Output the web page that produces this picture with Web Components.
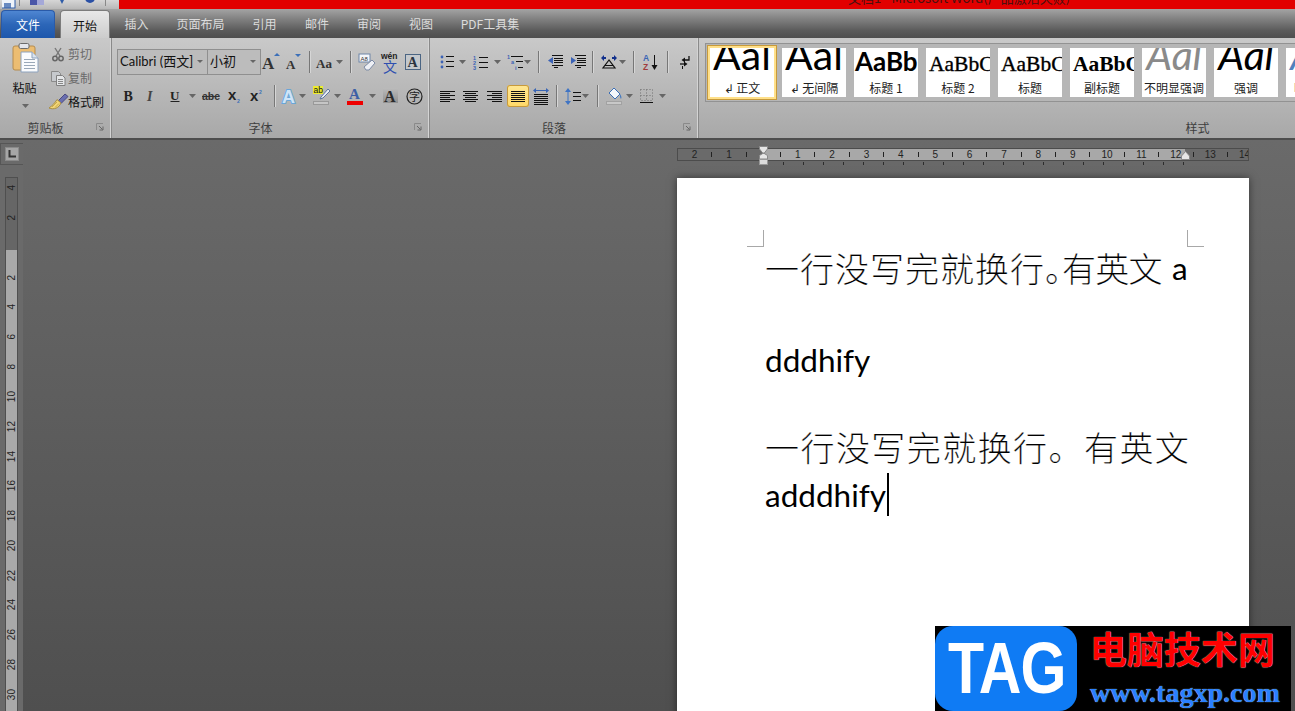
<!DOCTYPE html>
<html lang="zh-CN"><head><meta charset="utf-8"><title>Word</title>
<style>
html,body{margin:0;padding:0;height:711px;overflow:hidden;background:#555;font-family:"Noto Sans CJK SC","Liberation Sans",sans-serif}
</style></head><body>
<word-app>
  <title-bar slot="top"></title-bar>
  <tab-bar slot="top"></tab-bar>
  <w-ribbon slot="top">
    <rib-group w="112" label="剪贴板" launcher>
      <clip-panel></clip-panel>
    </rib-group>
    <rib-group w="318" label="字体" launcher>
      <tool-row pad="5">
        <w-combo w="91" text="Calibri (西文]"></w-combo><w-combo w="54" text="小初"></w-combo>
        <w-tool i="grow" w="22"></w-tool><w-tool i="shrink" w="22"></w-tool><w-sep w="10"></w-sep>
        <w-tool i="aa" w="21"></w-tool><w-drop w="9"></w-drop><w-sep w="12"></w-sep>
        <w-tool i="clear" w="22"></w-tool><w-tool i="wen" w="24"></w-tool><w-tool i="abox" w="22"></w-tool>
      </tool-row>
      <tool-row pad="5">
        <w-tool i="b" w="23"></w-tool><w-tool i="it" w="24"></w-tool><w-tool i="u" w="22"></w-tool><w-drop w="12"></w-drop>
        <w-tool i="abe" w="26"></w-tool><w-tool i="sub" w="22"></w-tool><w-tool i="sup" w="22"></w-tool><w-sep w="12"></w-sep>
        <w-tool i="fx" w="18"></w-tool><w-drop w="8"></w-drop><w-tool i="hl" w="30"></w-tool><w-drop w="3"></w-drop>
        <w-tool i="fc" w="32"></w-tool><w-drop w="2"></w-drop><w-tool i="shade" w="36"></w-tool><w-tool i="enc" w="10"></w-tool>
      </tool-row>
    </rib-group>
    <rib-group w="269" label="段落" launcher>
      <tool-row pad="5">
        <w-tool i="bul" w="24"></w-tool><w-drop w="6"></w-drop><w-tool i="num" w="30"></w-tool><w-drop w="4"></w-drop>
        <w-tool i="multi" w="20" m="6"></w-tool><w-drop w="4"></w-drop><w-sep w="18"></w-sep>
        <w-tool i="ded" w="16"></w-tool><w-tool i="ind" w="24" m="3"></w-tool><w-sep w="4"></w-sep>
        <w-tool i="cn" w="24" m="3"></w-tool><w-drop w="2"></w-drop><w-sep w="20"></w-sep>
        <w-tool i="sort" w="14"></w-tool><w-sep w="20"></w-sep><w-tool i="show" w="14"></w-tool>
      </tool-row>
      <tool-row pad="5">
        <w-tool i="left" w="24"></w-tool><w-tool i="center" w="22"></w-tool><w-tool i="right" w="26"></w-tool>
        <w-tool i="just" w="22" on></w-tool><w-tool i="dist" w="24"></w-tool><w-sep w="6"></w-sep>
        <w-tool i="ls" w="22" m="3"></w-tool><w-drop w="3"></w-drop><w-sep w="20"></w-sep>
        <w-tool i="fill" w="14"></w-tool><w-drop w="16"></w-drop><w-tool i="bord" w="20"></w-tool><w-drop w="10"></w-drop>
      </tool-row>
    </rib-group>
    <rib-group w="998" label="样式" last>
      <style-gallery>
        <style-item sel label="↲ 正文" pv="Aal" kind="big"></style-item>
        <style-item label="↲ 无间隔" pv="Aal" kind="big"></style-item>
        <style-item label="标题 1" pv="AaBb" kind="h1"></style-item>
        <style-item label="标题 2" pv="AaBbC" kind="h3"></style-item>
        <style-item label="标题" pv="AaBbC" kind="h3"></style-item>
        <style-item label="副标题" pv="AaBbC" kind="h2"></style-item>
        <style-item label="不明显强调" pv="Aal" kind="sub"></style-item>
        <style-item label="强调" pv="Aal" kind="em"></style-item>
        <style-item label="明显强调" pv="Aal" kind="blue"></style-item>
      </style-gallery>
    </rib-group>
  </w-ribbon>
  <work-space slot="main">
    <left-rail slot="left"></left-rail>
    <h-ruler slot="right"></h-ruler>
    <doc-page slot="right">
      <doc-line cjk>一行没写完就换行<span style="display:inline-block;width:17px;letter-spacing:0">。</span><span style="letter-spacing:-.7px">有英文</span><i style="font:31.5px/41px Lato,sans-serif;letter-spacing:0;margin-left:10px;-webkit-text-stroke:0;vertical-align:2px">a</i></doc-line>
      <doc-line style="margin-top:44px">dddhify</doc-line>
      <doc-line cjk style="margin-top:43px;letter-spacing:1.44px">一行没写完就换行。有英文</doc-line>
      <doc-line caret>adddhify</doc-line>
    </doc-page>
  </work-space>
  <tag-mark slot="over"></tag-mark>
</word-app>
<script>
const def=(n,css,html)=>{customElements.define(n,class extends HTMLElement{
  connectedCallback(){ if(this.shadowRoot) return; const s=this.attachShadow({mode:'open'});
    const b=html===undefined?'<slot></slot>':(typeof html==='function'?html(this):html);
    s.innerHTML='<style>'+css+'</style>'+b;}
})};
const SANS='"Noto Sans CJK SC","Liberation Sans",sans-serif';
const T=(x,y,t,sz,o={})=>`<text x="${x}" y="${y}" font-size="${sz}" font-family='${o.f||'"Liberation Serif",serif'}' font-weight="${o.w||'bold'}" font-style="${o.s||'normal'}" fill="${o.c||'#222'}" ${o.e||''}>${t}</text>`;
const R=(x,y,w,h,c='#111')=>`<rect x="${x}" y="${y}" width="${w}" height="${h}" fill="${c}"/>`;
const P=(d,c='none',s='#111',w=1)=>`<path d="${d}" fill="${c}" stroke="${s}" stroke-width="${w}"/>`;
const lines=(arr,c='#111')=>arr.map(a=>R(a[0],a[1],a[2],1,c)).join('');
const BL='#3b62b5';const LS='"Liberation Sans",sans-serif';
const ICONS={
 grow:[22,20,T(2,17,'A',17,{c:'#333'})+P('M14 4l3-3 3 3z','#3b6fb8','none')],
 shrink:[20,20,T(3,17,'A',13,{c:'#333'})+P('M12 2h6l-3 3z','#3b6fb8','none')],
 aa:[20,18,T(1,15,'Aa',13,{c:'#333'})],
 clear:[18,18,`<rect x="1" y="1" width="11" height="8" fill="#f4f6fa" stroke="#6e86a8"/>`+T(2.5,7.5,'A8',6,{c:'#333',f:LS,w:'normal'})+P('M6 14l8-7 3 3-6 7h-3z','#eef0f5','#7d8ba5')],
 wen:[20,22,T(1,8,'wén',8.5,{f:LS,c:'#222'})+T(3,21,'文',14,{f:SANS,w:'normal',c:'#2d4fb0'})],
 abox:[17,17,`<rect x=".5" y=".5" width="15" height="15" fill="#c4c8cc" stroke="#4b6583"/>`+T(2.5,13,'A',14,{c:'#2b3440'})],
 b:[14,16,T(1.5,13,'B',14,{c:'#222'})],
 it:[12,16,T(1,13,'I',14,{c:'#444',s:'italic'})],
 u:[12,16,T(1,11.5,'U',13,{c:'#222'})+R(1.5,13,9,1,'#222')],
 abe:[18,16,T(0,12,'abe',10.5,{c:'#333',f:LS})+R(0,8,17,1,'#333')],
 sub:[14,16,T(0,12,'x',15,{c:'#222',f:LS})+T(9,15,'2',5,{c:'#3b6fb8',f:LS})],
 sup:[14,16,T(0,13,'x',15,{c:'#222',f:LS})+T(9,6,'2',5,{c:'#3b6fb8',f:LS})],
 fx:[18,20,`<text x="2" y="17" font-size="18" font-family="Liberation Sans" font-weight="bold" fill="#cfe4f7" stroke="#6aa6d8" stroke-width="2" paint-order="stroke">A</text>`],
 hl:[18,20,R(1,0,10,8,'#ecec30')+T(1.5,7,'ab',8.5,{c:'#111',f:LS,w:'normal'})+P('M9 11l7-8 2 2-7 7-3 1z','#e8edf4','#5c76a0')+`<rect x="1.5" y="15.5" width="15" height="3" fill="#c6c6c6" stroke="#999"/>`],
 fc:[16,20,T(2,13,'A',15,{c:'#3c5fa5'})+R(0,15,16,4,'#ee0000')],
 shade:[16,16,`<defs><linearGradient id="s" x1="0" x2="0" y1="0" y2="1"><stop offset="0" stop-color="#bbb"/><stop offset="1" stop-color="#8f8f8f"/></linearGradient></defs><rect width="15" height="15" fill="url(#s)"/>`+T(1,14,'A',16,{c:'#2a2a2a'})],
 enc:[17,17,`<circle cx="8.5" cy="8.5" r="7.5" fill="none" stroke="#222" stroke-width="1.2"/>`+T(3,13,'字',11,{f:SANS,w:'normal',c:'#222'})],
 bul:[14,14,['2','7','12'].map(y=>`<circle cx="2" cy="${y}" r="1.4" fill="${BL}"/>`).join('')+lines([[6,1,8],[6,6,8],[6,11,8]])],
 num:[15,15,T(0,5,'1',5.5,{c:BL,f:LS})+T(0,10,'2',5.5,{c:BL,f:LS})+T(0,15,'3',5.5,{c:BL,f:LS})+lines([[6,2,9],[6,7,9],[6,12,9]])],
 multi:[16,16,T(0,5,'1',5.5,{c:BL,f:LS})+T(4,10,'a',5.5,{c:BL,f:LS})+T(8,16,'i',5.5,{c:BL,f:LS})+lines([[4,2,12],[9,7,7],[11,13,5]])],
 ded:[16,14,P('M6 2L1 5.5 6 9z',BL,'none')+lines([[5,0,11],[7,3,9],[7,5,9],[7,7,9],[5,10,11],[7,12,4]])],
 ind:[16,14,P('M1 2l5 3.5L1 9z',BL,'none')+lines([[5,0,11],[7,3,9],[7,5,9],[7,7,9],[5,10,11],[7,12,4]])],
 cn:[16,14,P('M8 5l-6 8h12z','none','#111',1.2)+R(4,10,8,1)+P('M0 3l3-3v2h2v2H3v2z','#12308c','none')+P('M16 3l-3-3v2h-2v2h2v2z','#12308c','none')],
 sort:[14,17,T(0,7,'A',8.5,{c:'#3a66b5',f:LS})+T(0,16,'Z',8.5,{c:'#a03c3c',f:LS})+R(11,1,1,12,'#111')+P('M8.5 11h6l-3 5z','#111','none')],
 show:[11,14,P('M10 1v4H5','none','#111',1.3)+P('M6 2.5L2.5 5 6 7.5z','#111','none')+P('M1 9h5','none','#111',1.3)+P('M5 6.5L8.5 9 5 11.5z','#111','none')+R(3,11,1,3)],
 left:[15,11,lines([[0,0,15],[0,2,10],[0,4,15],[0,6,10],[0,8,15],[0,10,10]])],
 center:[15,11,lines([[0,0,15],[2,2,11],[0,4,15],[2,6,11],[0,8,15],[2,10,11]])],
 right:[15,11,lines([[0,0,15],[5,2,10],[0,4,15],[5,6,10],[0,8,15],[5,10,10]])],
 just:[14,11,lines([[0,0,14],[0,2,14],[0,4,14],[0,6,14],[0,8,14],[0,10,14]])],
 dist:[16,17,P('M0 2.5l3-2.5v5zM16 2.5l-3-2.5v5z','#3a66b5','none')+R(2,2,12,1,'#3a66b5')+lines([[1,6,14],[1,8,14],[1,10,14],[1,12,14],[1,14,14],[1,16,14]])],
 ls:[16,17,P('M3 0l3 4H0zM3 17l3-4H0z','#3f74c4','none')+R(2.5,4,1,9,'#3f74c4')+lines([[8,4,8],[8,8,8],[8,12,8]])],
 fill:[17,18,P('M3 6l5-5 6 6-5 5z','#f4f7fb','#3c6fb6',1)+P('M14 7c1 2 2 3 1 5-1-1-1-3-1-5z','#3a74c0','none')+`<rect x=".5" y="14.500" width="15" height="3" fill="#c8c8c8" stroke="#a2a2a2"/>`],
 bord:[14,15,`<path d="M.5.5h12v11H.5zM6.5.5v11M.5 6.500h12" fill="none" stroke="#6e6e6e" stroke-dasharray="1 2"/>`+R(0,13,13,1,'#111')],
 paste:[28,32,`<rect x="1" y="4" width="22" height="24" rx="2" fill="#ecbd72" stroke="#b58c4e"/><rect x="7" y="1.5" width="10" height="5" rx="1.5" fill="#e4e6ec" stroke="#6b6b6b"/><path d="M9 10h11l6 6v14H9z" fill="#fafbfd" stroke="#8da2bd"/><path d="M20 10v6h6" fill="#dbe4ee" stroke="#8da2bd"/>`+lines([[12,17,11],[12,20,11],[12,23,11],[12,26,11]],'#9aa8b8')],
 cut:[12,15,P('M3 1l5 8M9 1L4 9','none','#777',1.4)+`<circle cx="3" cy="11.5" r="2.2" fill="none" stroke="#666" stroke-width="1.5"/><circle cx="9" cy="11.5" r="2.2" fill="none" stroke="#666" stroke-width="1.5"/>`],
 copy:[15,15,`<path d="M.5.5h7l2 2v8H.5z" fill="#c6c9cd" stroke="#8a8a8a"/><path d="M5.5 4.5h6l2.5 2.5v7.5H5.5z" fill="#e4e6e8" stroke="#808080"/>`+lines([[7,8,5],[7,10,5],[7,12,5]],'#888')],
 brush:[19,16,P('M9 7l7-7 3 2.500-7 7z','#6a6fb0','#4a4a80')+P('M0 14c5 2 10 0 12-5L8 5.500C6 9 3 12 0 14z','#f2d676','#a88e44')+P('M3 13l5-5M6 13.500l4-4','none','#c7a84e')]
};
const svg=k=>{const [w,h,b]=ICONS[k];return `<svg xmlns="http://www.w3.org/2000/svg" width="${w}" height="${h}" viewBox="0 0 ${w} ${h}" style="flex:none;display:block;overflow:visible">${b}</svg>`};

def('word-app',':host{display:block;position:relative;width:1295px;height:711px;overflow:hidden}.c{display:flex;flex-direction:column;height:100%}::slotted([slot=main]){flex:1;min-height:0}',
 '<div class="c"><slot name="top"></slot><slot name="main"></slot></div><slot name="over"></slot>');

def('title-bar',':host{display:flex;height:9px;overflow:hidden;flex:none}.q{width:119px;flex:none;background:linear-gradient(#d6d6d6,#b8b8b8);display:flex;align-items:flex-end;overflow:hidden;padding-left:2px;box-sizing:border-box;gap:0}.r{flex:1;background:#e20000;display:flex;justify-content:flex-start;padding-left:729px;overflow:hidden;color:#4a1010;font:13px/14px "Noto Sans CJK SC",sans-serif;white-space:nowrap}.t{margin-top:-9px}',
 `<div class="q"><svg width="110" height="9" viewBox="0 0 110 9" style="display:block;flex:none"><rect x="-1" y="-5" width="14" height="13" fill="#eef3fa" stroke="#2f5ca8"/><rect x="2" y="3" width="7" height="5" fill="#2f5ca8" opacity=".7"/><rect x="17" y="0" width="1" height="6" fill="#888"/><rect x="28" y="-5" width="14" height="10" fill="#4a56a8"/><rect x="35" y="0" width="7" height="5" fill="#a4a8d8"/><path d="M58 0h4l-2 4z" fill="#2f5ca8"/><circle cx="88" cy="-2" r="5" fill="#2a50a5"/><rect x="103" y="0" width="1" height="6" fill="#888"/></svg></div><div class="r"><span class="t">文档1 - Microsoft Word(产品激活失败)</span></div>`);

def('tab-bar',`:host{display:flex;flex:none;height:29px;background:linear-gradient(#a4a4a4,#8a8a8a 25%,#5a5a5a 75%,#4e4e4e);padding-left:1px;box-sizing:border-box;font:12px "Noto Sans CJK SC",sans-serif;color:#dcdcdc;overflow:hidden;position:relative;z-index:1}
 .t{display:flex;align-items:center;justify-content:center;flex:none;height:29px}
 .f{width:54px;box-sizing:border-box;height:28px;margin-top:1px;background:linear-gradient(#4e86d2,#2c66b8 50%,#1d57ac);border:1px solid #2a5aa8;border-bottom:none;border-radius:4px 4px 0 0;color:#fff;margin-right:5px}
 .h{width:50px;box-sizing:border-box;height:29px;margin-top:1px;background:linear-gradient(#e8e8e8,#cbcbcb);border:1px solid #7c7c7c;border-bottom:none;border-radius:4px 4px 0 0;color:#111}`,
 `<div class="t f">文件</div><div class="t h">开始</div>${[['插入',53],['页面布局',75],['引用',53],['邮件',52],['审阅',52],['视图',52],['PDF工具集',86]].map(a=>`<div class="t" style="width:${a[1]}px">${a[0]}</div>`).join('')}`);

def('w-ribbon',':host{display:flex;height:102px;box-sizing:border-box;background:linear-gradient(#c9c9c9,#a8a8a8);border-bottom:2px solid #4d4d4d;overflow:hidden;flex:none}');
def('rib-group',':host{display:flex;flex-direction:column;box-sizing:border-box;height:100px;flex:none;border-right:1px solid #8a8a8a;box-shadow:inset -1px 0 #d4d4d4;position:relative}.b{flex:1;min-height:0}.l{height:20px;flex:none;text-align:center;font:12px/20px "Noto Sans CJK SC",sans-serif;color:#3e3e3e}.pad{padding-right:20px}svg{position:absolute;right:7px;bottom:7px}',
 h=>{h.style.width=h.getAttribute('w')+'px';const L=h.hasAttribute('launcher');return `<div class="b"><slot></slot></div><div class="l ${L?'pad':''}">${h.getAttribute('label')}</div>${L?'<svg width="8" height="8" viewBox="0 0 8 8"><path d="M.5 7V.5H7" fill="none" stroke="#8a8a8a"/><path d="M3 3l3.5 3.5M7 3.5V7H3.5" fill="none" stroke="#666"/></svg>':''}`});

def('tool-row',':host{display:flex;align-items:center;height:26px;margin-bottom:8px}:host(:first-child){margin-top:11px}',h=>{h.style.paddingLeft=h.getAttribute('pad')+'px';return '<slot></slot>'});

def('w-tool',':host{display:flex;flex:none;align-items:center;justify-content:center;height:22px;box-sizing:border-box;border-radius:3px}:host([on]){background:linear-gradient(#ffe793,#ffd866);box-shadow:inset 0 0 0 1px #c79a3c}',
 h=>{h.style.width=h.getAttribute('w')+'px';if(h.hasAttribute('m'))h.style.marginLeft=h.getAttribute('m')+'px';return svg(h.getAttribute('i'))});
def('w-drop',':host{display:flex;flex:none;align-items:center;justify-content:center;height:22px}svg{flex:none}',
 h=>{h.style.width=h.getAttribute('w')+'px';return '<svg width="7" height="4" viewBox="0 0 7 4"><path d="M0 0h7L3.500 4z" fill="#666"/></svg>'});
def('w-sep',':host{display:flex;flex:none;justify-content:center;height:22px}i{display:block;flex:none;width:1px;background:#777;box-shadow:1px 0 #d6d6d6}',
 h=>{h.style.width=h.getAttribute('w')+'px';return '<i></i>'});
def('w-combo',':host{display:flex;flex:none;align-items:center;box-sizing:border-box;height:26px;border:1px solid #8f8f8f;background:#bcbcbc;font:13px/22px "Noto Sans CJK SC","Liberation Sans",sans-serif;color:#111;padding:0 0 2px 2px;margin-right:-1px;white-space:nowrap;overflow:hidden;position:relative}.t{font-family:Lato,"Noto Sans CJK SC",sans-serif;flex:1;overflow:hidden}svg{flex:none;margin:0 4px 0 2px}',
 h=>{h.style.width=h.getAttribute('w')+'px';return `<span class="t">${h.getAttribute('text')}</span><svg width="6" height="3" viewBox="0 0 6 3"><path d="M0 0h6L3 3z" fill="#666"/></svg>`});

def('clip-panel',':host{display:flex;padding-top:4px;height:76px;box-sizing:border-box;font:12px/16px "Noto Sans CJK SC",sans-serif}.p{width:49px;flex:none;display:flex;flex-direction:column;align-items:center}.p svg{margin-left:2px}.lb{margin-top:6px;color:#111}.ar{margin-top:8px}.s{display:flex;flex-direction:column;margin-top:0}.r{display:flex;align-items:center;height:25px;color:#6a6a6a}.r span{margin-left:1px}.ic{width:18px;display:flex;justify-content:center}.r.on{color:#111}',
 `<div class="p">${svg('paste')}<div class="lb">粘贴</div><svg class="ar" width="7" height="4" viewBox="0 0 7 4"><path d="M0 0h7L3.500 4z" fill="#666"/></svg></div><div class="s"><div class="r"><div class="ic">${svg('cut')}</div><span>剪切</span></div><div class="r"><div class="ic">${svg('copy')}</div><span>复制</span></div><div class="r on"><div class="ic">${svg('brush')}</div><span>格式刷</span></div></div>`);

def('style-gallery',':host{display:flex;align-items:center;gap:8px;height:59px;margin:5px 0 0 6px;box-sizing:border-box;border:1px solid #929292;border-right:none;background:#b6b6b6;padding-left:1px;overflow:hidden;width:592px}');
def('style-item',`:host{display:flex;flex-direction:column;flex:none;width:64px;height:49px;box-sizing:border-box;background:#fff;overflow:hidden;align-items:center}
 :host([sel]){width:70px;height:55px;border:3px solid #ffe08a;outline:1px solid #c79a3c;outline-offset:-1px;margin-right:-3px;}
 .pv{height:31px;width:100%;overflow:hidden;white-space:nowrap;display:flex;align-items:flex-start;justify-content:center;color:#000;flex:none;box-sizing:border-box}
 .pv span{display:block;flex:none}
 .lab{font:12px/17px "Noto Sans CJK SC",sans-serif;color:#222;white-space:nowrap}
 .big,.sub,.em,.blue{font-family:Lato,sans-serif;font-size:41px;line-height:31px}
 .big span,.sub span,.em span,.blue span{margin-top:-9px}
 .sub,.em,.blue{font-style:italic}.sub{color:#8a8a8a}.blue{color:#4f81bd}
 .h1{font:bold 26px/31px Lato,sans-serif;justify-content:flex-start;padding-left:1px}.h1 span{margin-top:-2px}
 .h2,.h3{font:bold 21.500px/31px "Liberation Serif",serif;justify-content:flex-start;padding-left:3px}.h2 span,.h3 span{margin-top:1px}
 .h3{font-weight:400;-webkit-text-stroke:.35px #000}`,
 h=>`<div class="pv ${h.getAttribute('kind')}"><span>${h.getAttribute('pv')}</span></div><div class="lab">${h.getAttribute('label')}</div>`);

def('work-space',':host{display:grid;grid-template-columns:23px 1fr;background:linear-gradient(#6a6a6a,#4f4f4f);overflow:hidden;min-height:0}.l{background:#6a6a6a;overflow:hidden;height:571px}.r{padding-left:654px;overflow:hidden;height:571px;box-sizing:border-box}',
 '<div class="l"><slot name="left"></slot></div><div class="r"><slot name="right"></slot></div>');

const vcells=()=>{let s='';[4,2,'',2,4,6,8,10,12,14,16,18,20,22,24,26,28,30,32].forEach(n=>{s+=`<div class="c"><span>${n}</span></div>`});return s};
def('left-rail',`:host{display:block}
 .k{width:24px;height:22px;box-sizing:border-box;margin-top:3px;border:1px solid #565656;display:flex;align-items:center;justify-content:center}
 .k b{display:flex;width:14px;height:14px;background:#a6a6a6;box-shadow:inset 0 0 0 1px #8a8a8a;align-items:center;justify-content:center}
 .v{margin:12px 0 0 5px;width:13px;height:560px;box-sizing:border-box;border:1px solid #4f4f4f;border-width:0 1px;background:linear-gradient(#666 0,#666 72px,#a9a9a9 72px);overflow:hidden;border-top:1px solid #4f4f4f}
 .c{height:29.800px;display:flex;align-items:center;justify-content:center;color:#222}
 .c:first-child{margin-top:-5px}
 .c span{writing-mode:vertical-rl;transform:rotate(180deg);font:10px/11px "Liberation Sans",sans-serif}`,
 `<div class="k"><b><svg width="8" height="8" viewBox="0 0 8 8"><path d="M1.500 0v6.500H8" fill="none" stroke="#333" stroke-width="2"/></svg></b></div><div class="v">${vcells()}</div>`);

const hcells=()=>{let s='';for(let k=-4;k<=28;k++){const n=Math.abs(k)/2;s+=`<div class="c">${k===0?'':(k%2===0?`<span>${n}</span>`:'<i></i>')}</div>`}return s};
const ticks=()=>{let s='';for(let i=0;i<21;i++)s+='<u></u>';return s};
def('h-ruler',`:host{display:block;width:572px;height:30px;margin-top:8px;position:relative}
 .b{display:flex;height:13px;box-sizing:border-box;border:1px solid #4c4c4c;background:linear-gradient(90deg,#6a6a6a 0,#6a6a6a 85px,#a8a8a8 85px,#a8a8a8 507px,#6a6a6a 507px);overflow:hidden;padding-left:8px}
 .c{flex:none;width:17.200px;height:11px;display:flex;align-items:center;justify-content:center;color:#222;font:10px/11px "Liberation Sans",sans-serif}
 .c i{display:block;width:1px;height:5px;background:#222}
 .t{display:flex;padding-left:105.500px;height:4px;margin-top:1px}.t u{display:block;flex:none;width:1px;height:3px;background:#2c2c2c;margin-right:19px}
 svg{position:absolute}`,
 `<div class="b">${hcells()}</div><div class="t">${ticks()}</div>
 <svg style="left:82px;top:-2px" width="10" height="20" viewBox="0 0 10 20"><path d="M.500.500h8V3L4.500 8 .500 3zM.500 13V9.500l4-2.500 4 2.500V13z" fill="#e6e6e6" stroke="#888"/><rect x=".5" y="13.500" width="8" height="5" fill="#dcdcdc" stroke="#999"/></svg>
 <svg style="left:504px;top:3px" width="10" height="9" viewBox="0 0 10 9"><path d="M.500 8.500V5L4.500.500 8.500 5v3.500z" fill="#e6e6e6" stroke="#888"/></svg>`);

def('doc-page',`:host{display:block;position:relative;width:572px;height:560px;box-sizing:border-box;background:#fff;padding:69px 0 0 88px;box-shadow:0 0 8px rgba(0,0,0,.5)}
 .m{position:absolute;top:52px;width:16px;height:16px;border:solid #a8a8a8;border-width:0}`,
 `<div class="m" style="left:70px;border-right-width:1px;border-bottom-width:1px"></div><div class="m" style="left:510px;border-left-width:1px;border-bottom-width:1px"></div><slot></slot>`);

def('doc-line',`:host{display:block;height:46px;white-space:nowrap;font:31.500px/46px Lato,"Noto Sans CJK SC",sans-serif;color:#000;position:relative;text-spacing-trim:space-all}
 :host([cjk]){font:200 34px/41px "Noto Sans CJK SC",sans-serif;letter-spacing:1px;-webkit-text-stroke:.2px #fff}
 b{display:inline-block;width:2px;height:43px;background:#000;vertical-align:-9px;margin-left:1px}`,
 h=>`<slot></slot>${h.hasAttribute('caret')?'<b></b>':''}`);

def('tag-mark',`:host{position:absolute;left:935px;top:626px;width:356px;height:85px;background:#000;display:flex;overflow:hidden}
 .t{width:142px;height:85px;flex:none;background:#0f7bf4;border-radius:18px;color:#fff;font:bold 72px/85px "Liberation Sans",sans-serif;text-align:center;letter-spacing:-1px}
 .t span{display:inline-block;transform:scaleX(.82);transform-origin:center}
 .r{flex:1;padding-left:13px;display:flex;flex-direction:column}
 .a{font:bold 37px/44px "Noto Sans CJK SC",sans-serif;color:#f00;text-shadow:0 0 1px #fff;white-space:nowrap}
 .b{font:bold 28px/30px "Liberation Serif",serif;color:#2a80ff;text-shadow:0 0 1px #cfe;margin-top:8px;white-space:nowrap}`,
 `<div class="t"><span>TAG</span></div><div class="r"><div class="a">电脑技术网</div><div class="b">www.tagxp.com</div></div>`);
</script>
</body></html>
